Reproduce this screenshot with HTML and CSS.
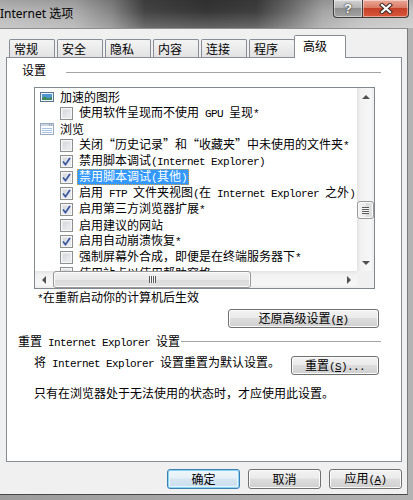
FILE: index.html
```html
<!DOCTYPE html>
<html lang="zh-CN">
<head>
  <meta charset="UTF-8" />
  <meta name="viewport" content="width=device-width, initial-scale=1.0"/>
  <title>Internet 选项</title>
  <link rel="stylesheet" href="styles.css">
</head>
<body>
  <!-- title bar -->
  <div class="titlebar">
    <span class="title">Internet 选项</span>
    <div class="caption-buttons">
      <div class="cap help">?</div>
      <div class="cap close">
        <svg width="14" height="11" viewBox="0 0 14 11">
          <path d="M3 2 L11 9 M11 2 L3 9" stroke="#3b2a26" stroke-width="4.2" stroke-linecap="square" fill="none"/>
          <path d="M3 2 L11 9 M11 2 L3 9" stroke="#fff" stroke-width="2.2" stroke-linecap="square" fill="none"/>
        </svg>
      </div>
    </div>
  </div>

  <div class="client">
    <!-- tabs -->
    <div class="tabs">
      <div class="tab">常规</div>
      <div class="tab">安全</div>
      <div class="tab">隐私</div>
      <div class="tab">内容</div>
      <div class="tab">连接</div>
      <div class="tab">程序</div>
      <div class="tab selected">高级</div>
    </div>

    <div class="panel">
      <div class="group-head"><span>设置</span><i class="rule"></i></div>

      <div class="listbox">
        <div class="items">
          <div class="row cat">
            <svg class="icon" width="14" height="12" viewBox="0 0 14 12">
              <rect x="0.5" y="1.5" width="13" height="9" fill="#eef3f8" stroke="#5d7390"/>
              <rect x="2" y="3" width="10" height="6" fill="#4f97d0"/>
              <path d="M2 9 L2 7 L5 5.5 L8 7.5 L12 6 L12 9 Z" fill="#3d8a5a"/>
            </svg>
            <span class="label">加速的图形</span>
          </div>
          <div class="row opt">
            <span class="cb"></span>
            <span class="label">使用软件呈现而不使用<span class="lat"> GPU </span>呈现<span class="lat">*</span></span>
          </div>
          <div class="row cat">
            <svg class="icon" width="14" height="12" viewBox="0 0 14 12">
              <rect x="0.5" y="0.5" width="13" height="11" fill="#fbfcfe" stroke="#9aa9bd"/>
              <rect x="1" y="1" width="12" height="2" fill="#c9d3df"/>
              <path d="M9 2 H10 M11 2 H12" stroke="#6c7c92"/>
              <path d="M2 5.5 H12 M2 7.5 H12 M2 9.5 H12" stroke="#a9c4e4"/>
            </svg>
            <span class="label">浏览</span>
          </div>
          <div class="row opt">
            <span class="cb"></span>
            <span class="label">关闭“历史记录”和“收藏夹”中未使用的文件夹<span class="lat">*</span></span>
          </div>
          <div class="row opt">
            <span class="cb checked"><svg width="9" height="9" viewBox="0 0 9 9"><path d="M1 4.5 L3.5 7.5 L8 1" stroke="#3c56a3" stroke-width="1.7" fill="none"/></svg></span>
            <span class="label">禁用脚本调试<span class="lat">(Internet Explorer)</span></span>
          </div>
          <div class="row opt">
            <span class="cb checked"><svg width="9" height="9" viewBox="0 0 9 9"><path d="M1 4.5 L3.5 7.5 L8 1" stroke="#3c56a3" stroke-width="1.7" fill="none"/></svg></span>
            <span class="label sel">禁用脚本调试<span class="lat">(</span>其他<span class="lat">)</span></span>
          </div>
          <div class="row opt">
            <span class="cb checked"><svg width="9" height="9" viewBox="0 0 9 9"><path d="M1 4.5 L3.5 7.5 L8 1" stroke="#3c56a3" stroke-width="1.7" fill="none"/></svg></span>
            <span class="label">启用<span class="lat"> FTP </span>文件夹视图<span class="lat">(</span>在<span class="lat"> Internet Explorer </span>之外<span class="lat">)</span></span>
          </div>
          <div class="row opt">
            <span class="cb checked"><svg width="9" height="9" viewBox="0 0 9 9"><path d="M1 4.5 L3.5 7.5 L8 1" stroke="#3c56a3" stroke-width="1.7" fill="none"/></svg></span>
            <span class="label">启用第三方浏览器扩展<span class="lat">*</span></span>
          </div>
          <div class="row opt">
            <span class="cb"></span>
            <span class="label">启用建议的网站</span>
          </div>
          <div class="row opt">
            <span class="cb checked"><svg width="9" height="9" viewBox="0 0 9 9"><path d="M1 4.5 L3.5 7.5 L8 1" stroke="#3c56a3" stroke-width="1.7" fill="none"/></svg></span>
            <span class="label">启用自动崩溃恢复<span class="lat">*</span></span>
          </div>
          <div class="row opt">
            <span class="cb"></span>
            <span class="label">强制屏幕外合成，即便是在终端服务器下<span class="lat">*</span></span>
          </div>
          <div class="row opt">
            <span class="cb"></span>
            <span class="label">使用站点以使用帮助窗格</span>
          </div>
        </div>

        <div class="vscroll">
          <div class="arrow up"></div>
          <div class="thumb vthumb"><i class="grip"></i></div>
          <div class="arrow down"></div>
        </div>
        <div class="hscroll">
          <div class="arrow left"></div>
          <div class="thumb hthumb"><i class="grip"></i></div>
          <div class="arrow right"></div>
        </div>
        <div class="corner"></div>
      </div>

      <div class="note"><span class="lat">*</span>在重新启动你的计算机后生效</div>

      <div class="restore-row">
        <div class="btn wide"><span>还原高级设置<span class="lat">(<u>R</u>)</span></span></div>
      </div>

      <div class="group-head reset-head"><span>重置<span class="lat"> Internet Explorer </span>设置</span><i class="rule"></i></div>

      <div class="reset-row">
        <span>将<span class="lat"> Internet Explorer </span>设置重置为默认设置。</span>
        <div class="btn reset"><span>重置<span class="lat">(<u>S</u>)...</span></span></div>
      </div>

      <div class="hint">只有在浏览器处于无法使用的状态时，才应使用此设置。</div>
    </div>

    <!-- dialog buttons -->
    <div class="actions">
      <div class="btn default">确定</div>
      <div class="btn">取消</div>
      <div class="btn"><span>应用<span class="lat">(<u>A</u>)</span></span></div>
    </div>
  </div>
</body>
</html>
```

FILE: styles.css
```css
* {
  box-sizing: border-box;
}

html, body {
  margin: 0;
  padding: 0;
}

body {
  width: 413px;
  height: 500px;
  overflow: hidden;
  background: linear-gradient(90deg, #9c9c9c, #b3b3b3);
  font: 12px/16px "Noto Sans CJK SC", "Liberation Sans", sans-serif;
  color: #000;
}

.lat {
  font-family: "Liberation Mono", monospace;
  font-size: 11px;
  letter-spacing: -0.6px;
}

u {
  text-decoration: underline;
}

/* title bar */
.titlebar {
  height: 28px;
  display: flex;
  justify-content: space-between;
  background:
    linear-gradient(180deg, rgba(0,0,0,0.12) 0%, rgba(0,0,0,0) 40%, rgba(255,255,255,0.22) 100%),
    linear-gradient(90deg, #b9b9b9 0%, #acacac 18%, #858585 27%, #444 35%, #363636 50%, #3f3f3f 62%, #6d6d6d 70%, #a3a3a3 78%, #bdbdbd 88%, #c6c6c6 100%);
}

.title {
  font-family: "Noto Sans", "Noto Sans CJK SC", sans-serif;
  font-size: 12px;
  line-height: 28px;
  color: #000;
}

.caption-buttons {
  display: flex;
  align-self: flex-start;
  margin-right: 4px;
}

.cap {
  height: 18px;
  display: flex;
  align-items: center;
  justify-content: center;
  border: 1px solid #3d3d3d;
  border-top: 0;
  box-shadow: inset 0 0 0 1px rgba(255,255,255,0.45);
}

.help {
  width: 29px;
  border-right: 0;
  border-radius: 0 0 0 4px;
  background: linear-gradient(#d2d2d2, #b5b5b5 45%, #8f8f8f 50%, #a3a3a3);
  color: #fff;
  font: bold 13px/1 "Liberation Sans", sans-serif;
  text-shadow: 0 0 1px #222, 0 0 2px #333;
}

.close {
  width: 47px;
  border-radius: 0 0 4px 0;
  background: linear-gradient(#eaa798, #da7b64 45%, #c6412a 50%, #d8573a);
}

/* client area */
.client {
  width: 408px;
  height: 467px;
  padding: 6px 5px 0 6px;
  background: #f0f0f0;
  border-top: 1px solid #8f8f8f;
  border-right: 1px solid #7a7a7a;
  border-bottom: 1px solid #474747;
}

.tabs {
  display: flex;
  align-items: flex-end;
  height: 23px;
  padding-left: 3px;
}

.tab {
  width: 46px;
  height: 18px;
  margin-bottom: 1px;
  padding-left: 4px;
  border: 1px solid #898c95;
  border-bottom: 0;
  border-radius: 2px 2px 0 0;
  background: linear-gradient(#f4f4f4, #e2e2e2);
  line-height: 17px;
}

.tab + .tab {
  margin-left: 2px;
}

.tab.selected {
  position: relative;
  z-index: 1;
  width: 52px;
  height: 23px;
  margin: 0 0 0 -1px;
  padding-left: 8px;
  background: #fff;
  line-height: 20px;
}

.panel {
  height: 405px;
  margin-top: -1px;
  padding-top: 4px;
  border: 1px solid #898c95;
  background: #fff;
}

.group-head {
  display: flex;
  margin: 0 20px 0 15px;
}

.group-head .rule {
  flex: 1;
  height: 1px;
  margin: 10px 0 0 20px;
  background: #a4a4a4;
}

/* settings list */
.listbox {
  width: 341px;
  height: 202px;
  margin: 9px 0 0 27px;
  border: 1px solid #828790;
  display: grid;
  grid-template-columns: 1fr 17px;
  grid-template-rows: 1fr 17px;
}

.items {
  overflow: hidden;
  padding-top: 1px;
}

.row {
  display: flex;
  align-items: center;
  height: 16px;
  white-space: nowrap;
}

.row.cat {
  padding-left: 5px;
}

.row.opt {
  padding-left: 25px;
}

.label {
  line-height: 14px;
}

.icon {
  flex: none;
  margin-right: 6px;
}

.cb {
  flex: none;
  width: 13px;
  height: 13px;
  margin-right: 6px;
  display: flex;
  align-items: center;
  justify-content: center;
  border: 1px solid #8e8f8f;
  background: linear-gradient(135deg, #cdd1d6, #f3f4f5);
  box-shadow: inset 0 0 0 1px #f6f6f6, inset 0 0 0 2px #e8e9ea;
}

.sel {
  padding: 0 2px;
  margin-left: -2px;
  background: #3399ff;
  color: #fff;
  outline: 1px dotted #d9a04a;
  outline-offset: -1px;
}

/* scrollbars */
.vscroll {
  display: flex;
  flex-direction: column;
  background: linear-gradient(90deg, #e3e3e3, #f1f1f1 20%, #f7f7f7 80%, #ececec);
}

.hscroll {
  display: flex;
  background: linear-gradient(#e3e3e3, #f1f1f1 20%, #f7f7f7 80%, #ececec);
}

.corner {
  background: #f0f0f0;
}

.arrow {
  flex: none;
  width: 17px;
  height: 17px;
  display: flex;
  align-items: center;
  justify-content: center;
}

.arrow::before {
  content: "";
  width: 0;
  height: 0;
  border: 4px solid transparent;
}

.up::before {
  border-top: 0;
  border-bottom-color: #505050;
}

.down {
  margin-top: auto;
}

.down::before {
  border-bottom: 0;
  border-top-color: #505050;
}

.left::before {
  border-left: 0;
  border-right-color: #505050;
}

.right {
  margin-left: auto;
}

.right::before {
  border-right: 0;
  border-left-color: #505050;
}

.thumb {
  display: flex;
  align-items: center;
  justify-content: center;
  border: 1px solid #979797;
  border-radius: 3px;
  box-shadow: inset 0 0 0 1px #fbfbfb;
}

.vthumb {
  height: 18px;
  margin: 96px 0 0 0;
  background: linear-gradient(90deg, #f3f3f3, #e9e9e9 50%, #dadada 50%, #e2e2e2);
}

.hthumb {
  width: 198px;
  margin-left: 1px;
  background: linear-gradient(#f3f3f3, #e9e9e9 50%, #dadada 50%, #e2e2e2);
}

.grip {
  width: 7px;
  height: 7px;
}

.vthumb .grip {
  background: repeating-linear-gradient(#5a5a5a 0 1px, #f8f8f8 1px 2px);
}

.hthumb .grip {
  background: repeating-linear-gradient(90deg, #5a5a5a 0 1px, #f8f8f8 1px 2px);
}

/* lower part of the panel */
.note {
  margin-left: 30px;
}

.restore-row {
  display: flex;
  justify-content: flex-end;
  margin-top: 2px;
  padding-right: 22px;
}

.btn {
  height: 19px;
  display: flex;
  align-items: center;
  justify-content: center;
  border: 1px solid #707070;
  border-radius: 3px;
  background: linear-gradient(#f2f2f2, #ebebeb 45%, #dddddd 50%, #cfcfcf);
  box-shadow: inset 0 0 0 1px #fbfbfb;
  white-space: nowrap;
}

.btn.wide {
  width: 151px;
}

.reset-head {
  margin: 5px 20px 0 11px;
}

.reset-head .rule {
  margin: 8px 0 0 1px;
}

.reset-row {
  display: flex;
  align-items: flex-start;
  margin-top: 3px;
  padding: 0 22px 0 27px;
}

.btn.reset {
  width: 88px;
  margin: 2px 0 0 auto;
}

.hint {
  margin: 10px 0 0 27px;
}

/* dialog buttons */
.actions {
  display: flex;
  justify-content: flex-end;
  gap: 8px;
  margin-top: 7px;
}

.actions .btn {
  width: 73px;
  height: 20px;
}

.btn.default {
  border-color: #3c7fb1;
  box-shadow: inset 0 0 0 1px #8ad3f5, inset 0 0 0 2px #eaf6fd;
  background: linear-gradient(#eef6fb, #e6f0f7 45%, #d6e5f0 50%, #cadeee);
}
```
